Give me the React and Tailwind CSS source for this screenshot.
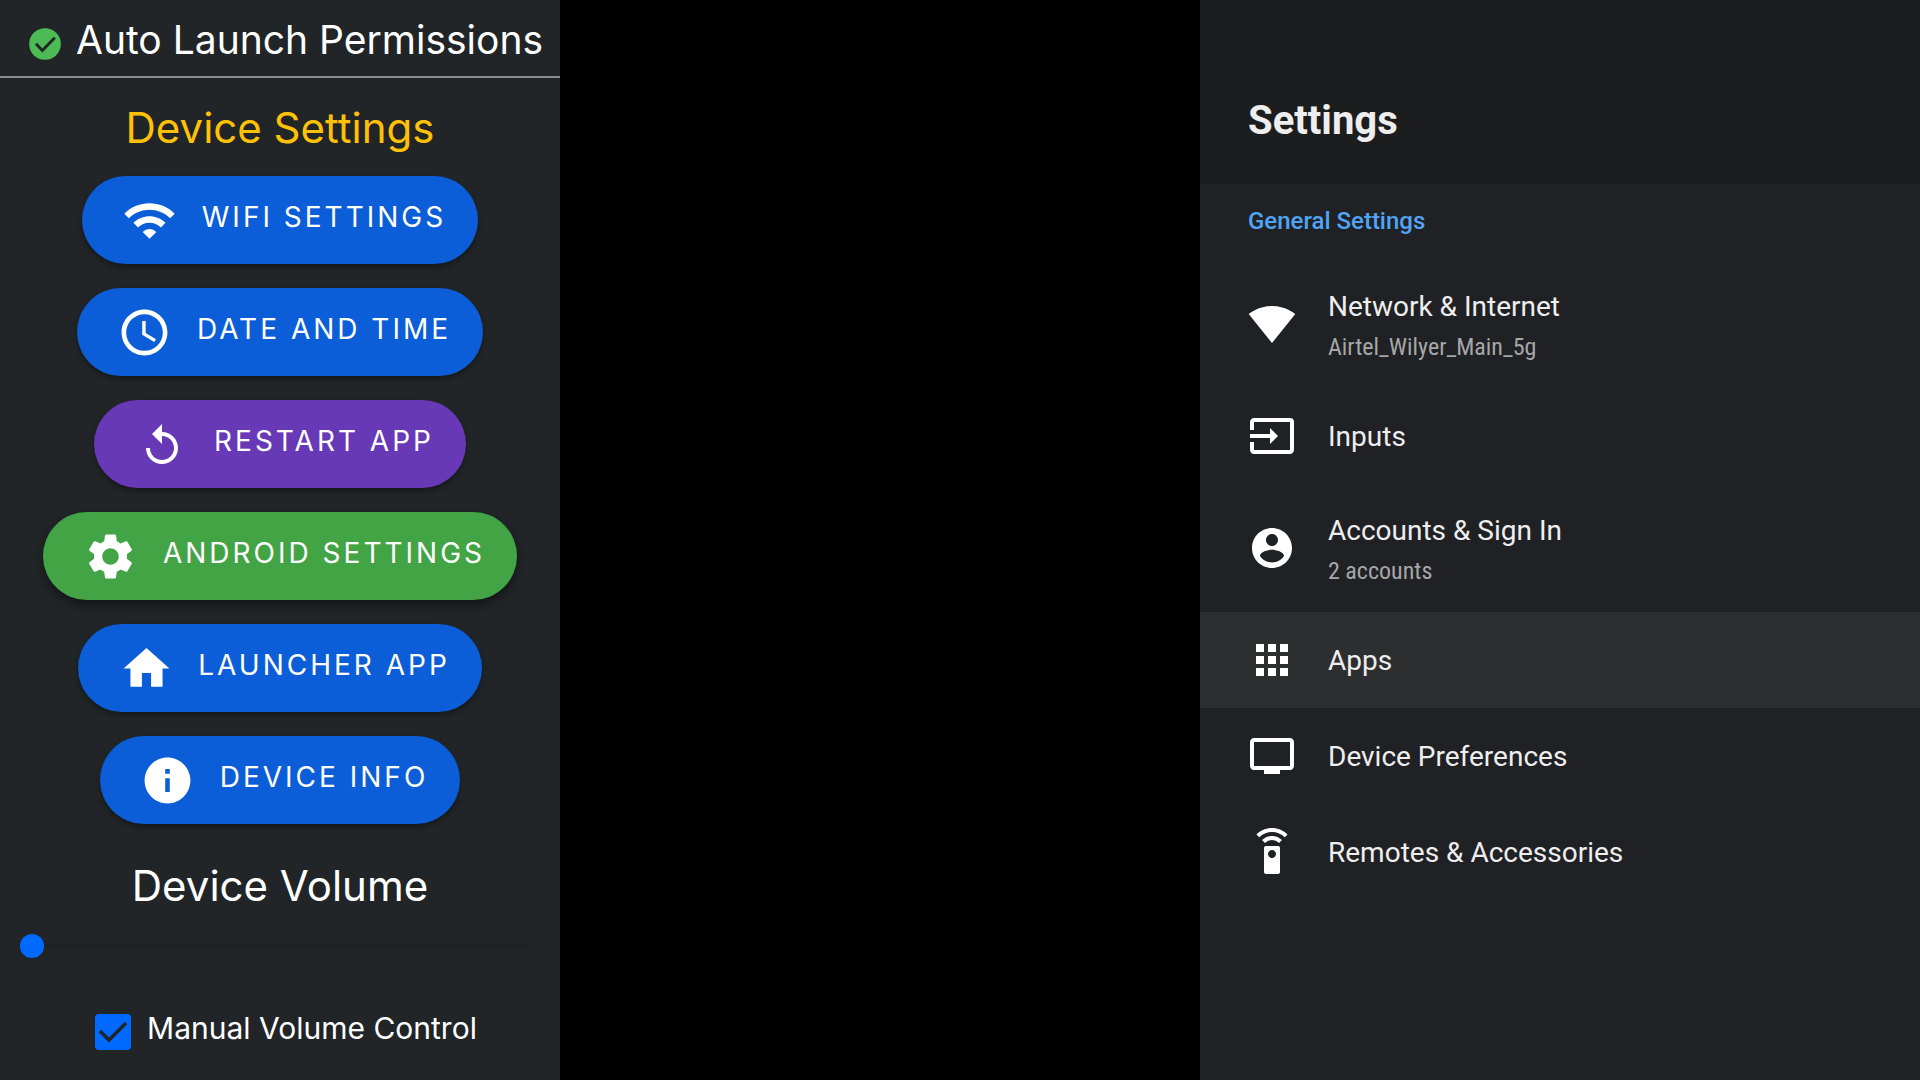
import { useState } from 'react';
import {
  MdAccessTime,
  MdApps,
  MdHome,
  MdInfo,
  MdInput,
  MdReplay,
  MdSettings,
  MdSettingsRemote,
  MdSignalWifi4Bar,
  MdTv,
  MdWifi,
} from 'react-icons/md';

function AccountIcon({ className }) {
  return (
    <svg viewBox="0 0 24 24" fill="currentColor" className={className}>
      <path d="M12 2C6.48 2 2 6.48 2 12s4.48 10 10 10 10-4.48 10-10S17.52 2 12 2zm0 3c1.66 0 3 1.34 3 3s-1.34 3-3 3-3-1.34-3-3 1.34-3 3-3zm0 14.2c-2.5 0-4.71-1.28-6-3.22.03-1.99 4-3.08 6-3.08 1.99 0 5.97 1.09 6 3.08-1.29 1.94-3.5 3.22-6 3.22z" />
    </svg>
  );
}

const actions = [
  { label: 'WIFI SETTINGS', icon: MdWifi, color: 'bg-[#0b5ed7]' },
  { label: 'DATE AND TIME', icon: MdAccessTime, color: 'bg-[#0b5ed7]' },
  { label: 'RESTART APP', icon: MdReplay, color: 'bg-[#6839b6]', small: true },
  { label: 'ANDROID SETTINGS', icon: MdSettings, color: 'bg-[#43a446]', raised: true },
  { label: 'LAUNCHER APP', icon: MdHome, color: 'bg-[#0b5ed7]' },
  { label: 'DEVICE INFO', icon: MdInfo, color: 'bg-[#0b5ed7]' },
];

const menu = [
  { label: 'Network & Internet', detail: 'Airtel_Wilyer_Main_5g', icon: MdSignalWifi4Bar },
  { label: 'Inputs', icon: MdInput },
  { label: 'Accounts & Sign In', detail: '2 accounts', icon: AccountIcon },
  { label: 'Apps', icon: MdApps, active: true },
  { label: 'Device Preferences', icon: MdTv },
  { label: 'Remotes & Accessories', icon: MdSettingsRemote },
];

function ActionButton({ label, icon: Icon, color, small, raised }) {
  return (
    <button
      type="button"
      className={`flex h-22 items-center rounded-full pr-8 pl-10 text-white ${color} ${
        raised ? 'shadow-[0_5px_10px_rgba(0,0,0,0.4)]' : 'shadow-[0_3px_5px_rgba(0,0,0,0.35)]'
      }`}
    >
      <span className="flex w-14 justify-center">
        <Icon className={small ? 'mt-1 size-12' : 'size-[55px]'} />
      </span>
      <span className="ml-6 pb-1.5 text-[28px] leading-10 tracking-[3px] whitespace-nowrap">{label}</span>
    </button>
  );
}

function DevicePanel() {
  const [volume, setVolume] = useState(0);
  const [manual, setManual] = useState(true);

  return (
    <aside className="flex flex-col bg-[#212527] font-[Inter,sans-serif] text-white">
      <header className="flex h-[78px] items-center gap-3 border-b-2 border-[#8b8d8f] pt-1 pl-[26px]">
        <svg viewBox="0 0 24 24" className="mt-2 size-[38px] shrink-0">
          <circle cx="12" cy="12" r="10" fill="#4dbb55" />
          <path d="M6.3 11.8l4 4.3L18.2 8" fill="none" stroke="#212527" strokeWidth="1.8" />
        </svg>
        <h1 className="text-[39px] leading-12 whitespace-nowrap">Auto Launch Permissions</h1>
      </header>

      <h2 className="mt-[26px] text-center text-[42px] leading-12 text-[#ffc107]">Device Settings</h2>

      <div className="mt-6 flex flex-col items-center gap-6">
        {actions.map((action) => (
          <ActionButton key={action.label} {...action} />
        ))}
      </div>

      <label htmlFor="volume" className="mt-[38px] text-center text-[42px] leading-12">
        Device Volume
      </label>
      <input
        id="volume"
        type="range"
        min="0"
        max="100"
        value={volume}
        onChange={(e) => setVolume(Number(e.target.value))}
        className="mt-6 mr-8 ml-5 h-6 appearance-none bg-transparent [&::-webkit-slider-runnable-track]:h-1 [&::-webkit-slider-runnable-track]:bg-[#1e2124] [&::-webkit-slider-thumb]:-mt-[10px] [&::-webkit-slider-thumb]:size-6 [&::-webkit-slider-thumb]:appearance-none [&::-webkit-slider-thumb]:rounded-full [&::-webkit-slider-thumb]:bg-[#0069ff]"
      />

      <div className="mt-[52px] flex items-center justify-center gap-4 pl-3">
        <span className="relative mt-1 size-9">
          <input
            id="manual"
            type="checkbox"
            checked={manual}
            onChange={(e) => setManual(e.target.checked)}
            className="block size-9 appearance-none rounded-sm border-2 border-[#0069ff] checked:bg-[#0069ff]"
          />
          {manual && (
            <svg viewBox="0 0 36 36" className="pointer-events-none absolute inset-0 size-9">
              <path d="M5 17l9 9L31 9" fill="none" stroke="#212527" strokeWidth="3.4" />
            </svg>
          )}
        </span>
        <label htmlFor="manual" className="pb-1 text-[30px] leading-9">
          Manual Volume Control
        </label>
      </div>
    </aside>
  );
}

function SettingsPanel() {
  return (
    <main className="flex flex-col bg-[#202124] font-[Roboto,sans-serif] text-[#eeeeee]">
      <header className="h-[184px] bg-[#1c1d1e] px-12 pt-[97px]">
        <h2 className="text-[40px] leading-12 font-bold">Settings</h2>
      </header>
      <h3 className="px-12 pt-[21px] pb-[23px] text-2xl leading-8 font-medium text-[#51a4f5]">General Settings</h3>
      <nav>
        {menu.map(({ label, detail, icon: Icon, active }) => (
          <a
            key={label}
            href="#"
            className={`flex items-center gap-8 px-12 ${detail ? 'h-32' : 'h-24'} ${active ? 'bg-[#2d2e30]' : ''}`}
          >
            <Icon className="size-12 shrink-0 text-white" />
            <span className={`flex flex-col gap-1 ${detail ? 'pt-1.5' : 'pt-px'}`}>
              <span className="text-[28px] leading-9">{label}</span>
              {detail && (
                <span className="font-['Roboto_Condensed',Roboto,sans-serif] text-2xl leading-9 text-[#a6a7a8]">
                  {detail}
                </span>
              )}
            </span>
          </a>
        ))}
      </nav>
    </main>
  );
}

export default function App() {
  return (
    <div className="grid min-h-screen grid-cols-[7fr_8fr_9fr] bg-black">
      <DevicePanel />
      <div />
      <SettingsPanel />
    </div>
  );
}
